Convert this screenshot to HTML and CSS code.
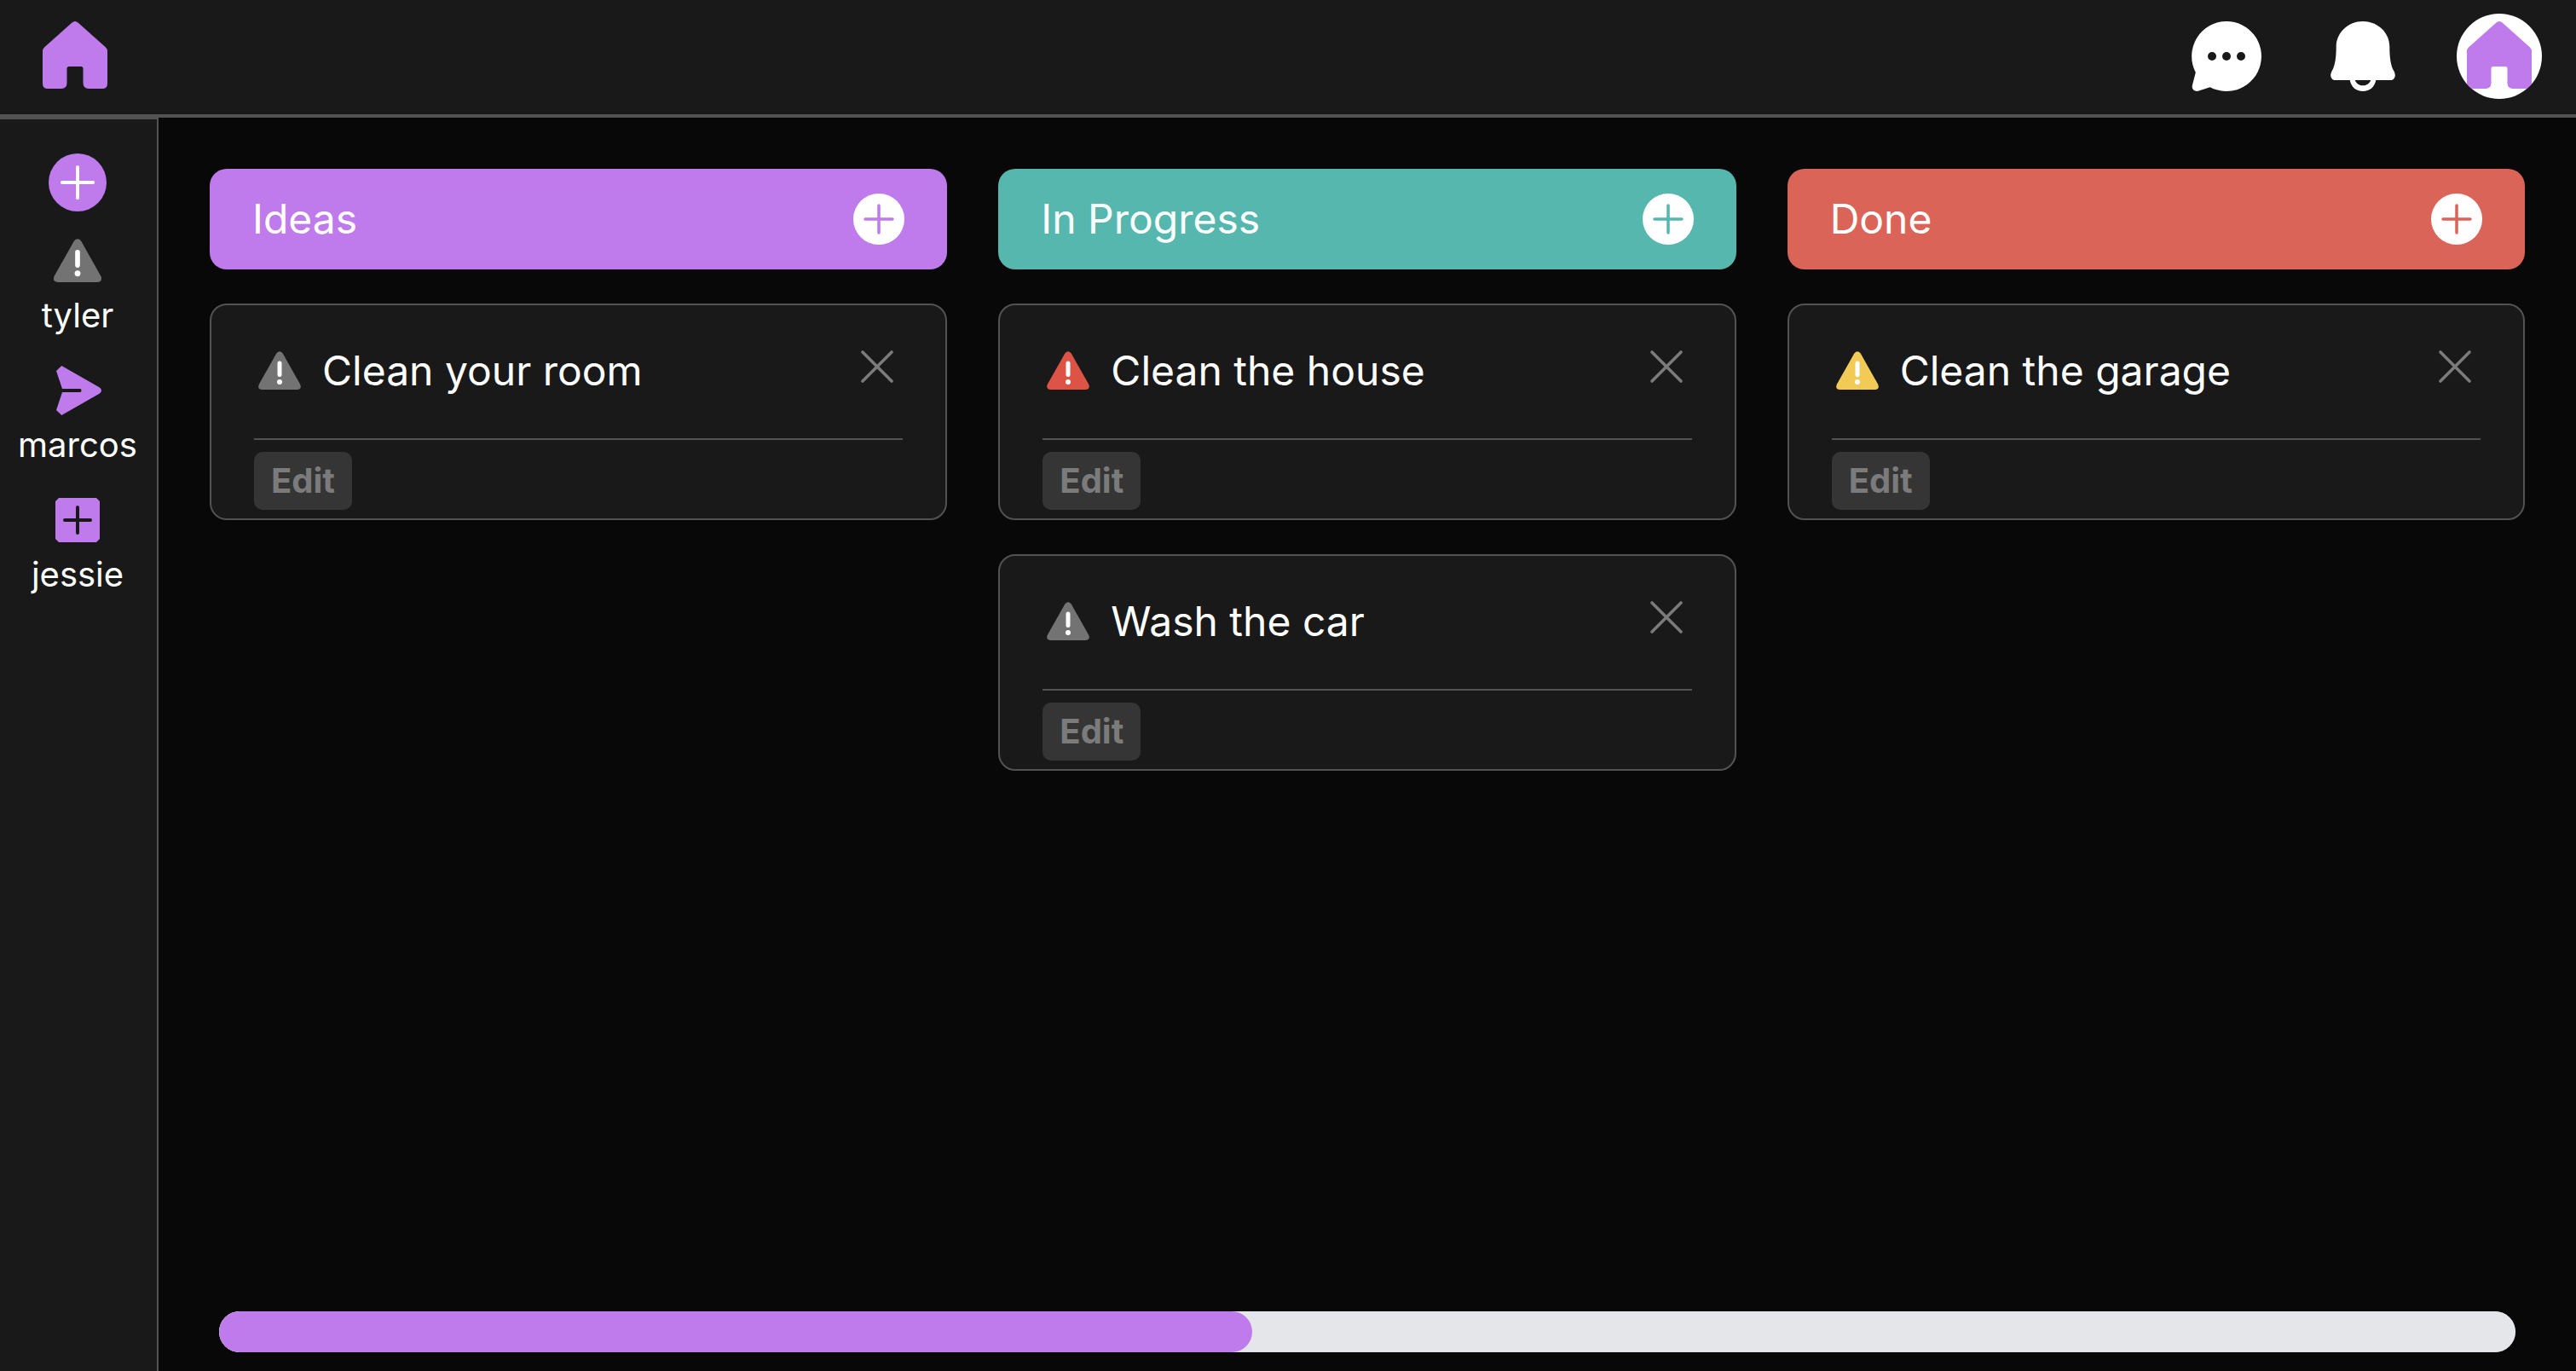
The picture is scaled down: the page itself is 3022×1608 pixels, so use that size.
FILE: index.html
```html
<!DOCTYPE html>
<html lang="en">
<head>
<meta charset="utf-8">
<meta name="viewport" content="width=device-width, initial-scale=1">
<title>Task board</title>
<link rel="stylesheet" href="styles.css">
</head>
<body>
<svg class="sprite" aria-hidden="true">
  <symbol id="house" viewBox="0 0 100 100">
    <path d="M46.500 10.500Q50 7.500 53.500 10.500L86 39.500Q88 41.500 88 44V82Q88 88 82 88H66Q59.500 88 59.500 81V64.500Q59.500 62 57 62H43Q40.500 62 40.500 64.500V81Q40.500 88 34 88H18Q12 88 12 82V44Q12 41.500 14 39.500Z" fill="#bf7bec"/>
  </symbol>
  <symbol id="warning" viewBox="0 0 60 60">
    <path d="M26.300 9.500Q30 5.200 33.700 9.500L54.300 46Q56.400 52 50 52H10Q3.600 52 5.700 46Z" fill="currentColor"/>
    <path d="M30 21V34.500" stroke="#fff" stroke-width="5" stroke-linecap="round"/>
    <circle cx="30" cy="43" r="3" fill="#fff"/>
  </symbol>
  <symbol id="plus" viewBox="0 0 60 60">
    <path d="M30 14V46M14 30H46" stroke="currentColor" stroke-width="3.500" stroke-linecap="round"/>
  </symbol>
  <symbol id="cross" viewBox="0 0 60 60">
    <path d="M13 13L47 47M47 13L13 47" stroke="currentColor" stroke-width="3.600" stroke-linecap="round"/>
  </symbol>
</svg>

<header class="topbar">
  <a class="logo" href="#" aria-label="Home"><svg class="nav-icon"><use href="#house"/></svg></a>
  <nav class="actions">
    <button class="icon-button" aria-label="Messages">
      <svg class="nav-icon" viewBox="0 0 100 100">
        <path d="M50 9A41 41 0 1 1 30.700 86.200L17.500 90.600C12.500 92 8.600 88.500 10 83.500L13.800 69A41 41 0 0 1 50 9Z" fill="#fff"/>
        <circle cx="33" cy="50" r="5" fill="#191919"/>
        <circle cx="50" cy="50" r="5" fill="#191919"/>
        <circle cx="67" cy="50" r="5" fill="#191919"/>
      </svg>
    </button>
    <button class="icon-button" aria-label="Notifications">
      <svg class="nav-icon" viewBox="0 0 100 100">
        <path d="M50 9C67 9 81.300 22 81.300 39C81.300 51 82.500 61 86.500 67.500C89.500 73 87 78 82 78H18C13 78 10.500 73 13.500 67.500C17.500 61 18.700 51 18.700 39C18.700 22 33 9 50 9Z" fill="#fff"/>
        <path d="M34.500 77C36 86 42 91 50 91S64 86 65.500 77L59.300 78C57.500 82 54.500 84.300 50 84.300S42.500 82 40.700 78Z" fill="#fff"/>
      </svg>
    </button>
    <button class="icon-button avatar" aria-label="Profile"><svg class="nav-icon"><use href="#house"/></svg></button>
  </nav>
</header>

<div class="layout">
  <aside class="sidebar">
    <button class="icon-button add-member" aria-label="Add member"><svg class="add-member-icon"><use href="#plus"/></svg></button>
    <a class="member" href="#">
      <svg class="member-icon warning-low"><use href="#warning"/></svg>
      <span>tyler</span>
    </a>
    <a class="member" href="#">
      <svg class="member-icon" viewBox="0 0 68 68">
        <path d="M9 11L15.300 5L59.500 30.300Q62 31.800 62 34T59.500 37.700L15.300 63L9 57L16 36H37Q38.500 36 38.500 34T37 32H16Z" fill="#bf7bec"/>
      </svg>
      <span>marcos</span>
    </a>
    <a class="member" href="#">
      <svg class="member-icon" viewBox="0 0 68 68">
        <path d="M12 8H56L60 12V56L56 60H12L8 56V12Z" fill="#bf7bec"/>
        <path d="M34 19V49M19 34H49" stroke="#191919" stroke-width="4" stroke-linecap="round"/>
      </svg>
      <span>jessie</span>
    </a>
  </aside>

  <main class="main">
    <div class="board">
      <section class="column">
        <header class="column-header ideas">
          <h2 class="title">Ideas</h2>
          <button class="icon-button add-task" aria-label="Add idea"><svg class="task-icon"><use href="#plus"/></svg></button>
        </header>
        <article class="card">
          <div class="card-top">
            <div class="card-label"><svg class="task-icon warning-low"><use href="#warning"/></svg><h3 class="title">Clean your room</h3></div>
            <button class="icon-button remove" aria-label="Remove"><svg class="task-icon"><use href="#cross"/></svg></button>
          </div>
          <button class="edit">Edit</button>
        </article>
      </section>

      <section class="column">
        <header class="column-header progress">
          <h2 class="title">In Progress</h2>
          <button class="icon-button add-task" aria-label="Add task in progress"><svg class="task-icon"><use href="#plus"/></svg></button>
        </header>
        <article class="card">
          <div class="card-top">
            <div class="card-label"><svg class="task-icon warning-high"><use href="#warning"/></svg><h3 class="title">Clean the house</h3></div>
            <button class="icon-button remove" aria-label="Remove"><svg class="task-icon"><use href="#cross"/></svg></button>
          </div>
          <button class="edit">Edit</button>
        </article>
        <article class="card">
          <div class="card-top">
            <div class="card-label"><svg class="task-icon warning-low"><use href="#warning"/></svg><h3 class="title">Wash the car</h3></div>
            <button class="icon-button remove" aria-label="Remove"><svg class="task-icon"><use href="#cross"/></svg></button>
          </div>
          <button class="edit">Edit</button>
        </article>
      </section>

      <section class="column">
        <header class="column-header done">
          <h2 class="title">Done</h2>
          <button class="icon-button add-task" aria-label="Add done task"><svg class="task-icon"><use href="#plus"/></svg></button>
        </header>
        <article class="card">
          <div class="card-top">
            <div class="card-label"><svg class="task-icon warning-medium"><use href="#warning"/></svg><h3 class="title">Clean the garage</h3></div>
            <button class="icon-button remove" aria-label="Remove"><svg class="task-icon"><use href="#cross"/></svg></button>
          </div>
          <button class="edit">Edit</button>
        </article>
      </section>
    </div>
    <progress class="completion" max="100" value="45" aria-label="Completion">45%</progress>
  </main>
</div>
</body>
</html>
```
FILE: styles.css
```css
:root {
  --page: #080808;
  --panel: #191919;
  --line: #525252;
  --muted: #7b7b7b;
  --purple: #bf7bec;
  --teal: #55b7ad;
  --red: #da6458;
}

* {
  box-sizing: border-box;
}

body {
  margin: 0;
  min-height: 100vh;
  display: flex;
  flex-direction: column;
  background: var(--page);
  color: #fff;
  font-family: Inter, "Liberation Sans", sans-serif;
  font-size: 40px;
  line-height: 60px;
}

svg {
  display: block;
  flex: none;
}

.sprite {
  display: none;
}

.icon-button {
  flex: none;
  padding: 0;
  border: 0;
  background: none;
  color: inherit;
  cursor: pointer;
}

.topbar {
  display: flex;
  justify-content: space-between;
  padding: 16px 40px 18px 38px;
  background: var(--panel);
  border-bottom: 4px solid var(--line);
}

.actions {
  display: flex;
  gap: 60px;
}

.nav-icon {
  width: 100px;
  height: 100px;
}

.avatar {
  border-radius: 50%;
  background: #fff;
  overflow: hidden;
}

.layout {
  flex: 1;
  display: flex;
}

.sidebar {
  flex: none;
  width: 186px;
  display: flex;
  flex-direction: column;
  align-items: center;
  gap: 24px;
  padding: 40px 2px 40px 0;
  background: var(--panel);
  border-top: 2px solid var(--line);
  border-right: 2px solid var(--line);
}

.add-member {
  border-radius: 50%;
  background: var(--purple);
}

.add-member-icon {
  width: 68px;
  height: 68px;
}

.member {
  display: flex;
  flex-direction: column;
  align-items: center;
  color: inherit;
  text-decoration: none;
}

.member-icon {
  width: 68px;
  height: 68px;
}

.warning-low {
  color: #737373;
}

.warning-medium {
  color: #f2cb57;
}

.warning-high {
  color: #dd5447;
}

.main {
  flex: 1;
  min-width: 0;
  display: flex;
  flex-direction: column;
  justify-content: space-between;
  align-items: center;
  padding-bottom: 22px;
}

.board {
  width: 100%;
  display: grid;
  grid-template-columns: repeat(3, minmax(0, 1fr));
  gap: 60px;
  padding: 60px;
}

.column {
  display: flex;
  flex-direction: column;
  gap: 40px;
}

.column-header {
  display: flex;
  justify-content: space-between;
  align-items: center;
  padding: 29px 50px;
  border-radius: 20px;
}

.ideas {
  background: var(--purple);
  --accent: var(--purple);
}

.progress {
  background: var(--teal);
  --accent: var(--teal);
}

.done {
  background: var(--red);
  --accent: var(--red);
}

.title {
  margin: 0;
  font-size: 48px;
  font-weight: 400;
  line-height: 60px;
}

.task-icon {
  width: 60px;
  height: 60px;
}

.add-task {
  border-radius: 50%;
  background: #fff;
  color: var(--accent);
}

.card {
  padding: 42px 50px 10px;
  background: var(--panel);
  border: 2px solid var(--line);
  border-radius: 20px;
}

.card-top {
  display: flex;
  justify-content: space-between;
  align-items: flex-start;
  margin-bottom: 14px;
  padding-bottom: 49px;
  border-bottom: 2px solid var(--line);
}

.card-label {
  display: flex;
  gap: 20px;
  padding-top: 5px;
}

.remove {
  color: var(--muted);
}

.edit {
  display: block;
  padding: 4px 20px;
  border: 0;
  border-radius: 10px;
  background: #353535;
  color: var(--muted);
  font: inherit;
  font-weight: 700;
  cursor: pointer;
}

.completion {
  appearance: none;
  display: block;
  width: 95%;
  height: 48px;
  border: 0;
  border-radius: 24px;
  background: #e5e6ea;
  overflow: hidden;
}

.completion::-webkit-progress-bar {
  border-radius: 24px;
  background: #e5e6ea;
}

.completion::-webkit-progress-value {
  border-radius: 24px;
  background: var(--purple);
}

.completion::-moz-progress-bar {
  border-radius: 24px;
  background: var(--purple);
}
```
